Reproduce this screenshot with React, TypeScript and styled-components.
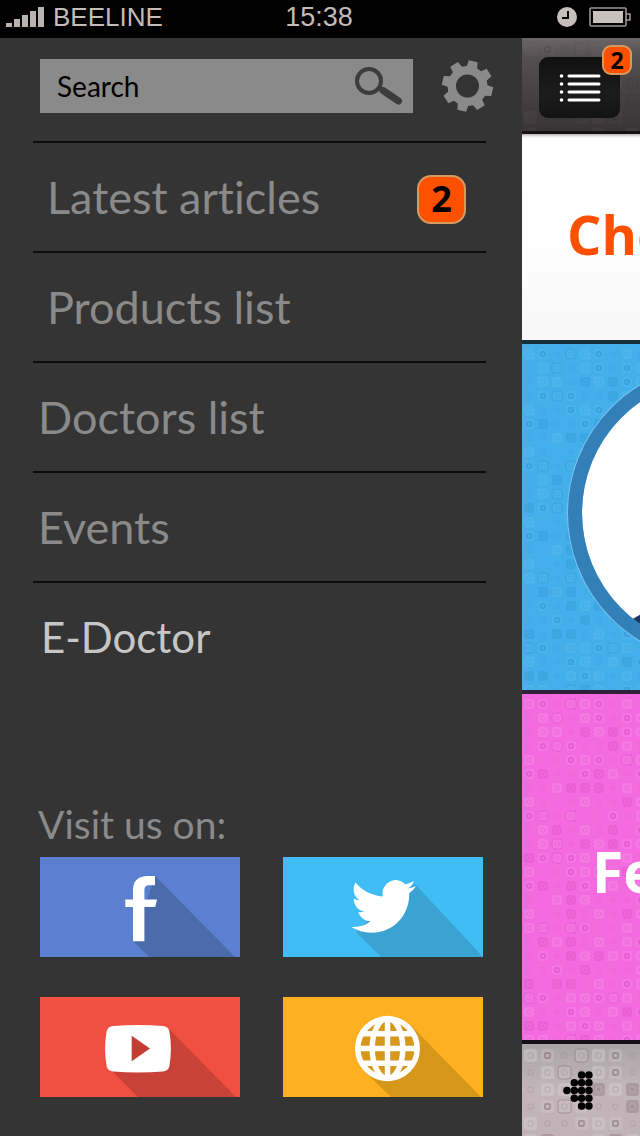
import React from "react";
import styled, { createGlobalStyle } from "styled-components";

const humanist = `Lato, "Open Sans", sans-serif`;
const bold = `"Open Sans", "Noto Sans", sans-serif`;

const GlobalStyle = createGlobalStyle`
  * { box-sizing: border-box; }
  body { margin: 0; background: #343434; font-family: ${humanist}; font-variant-ligatures: none; }
  button { border: 0; padding: 0; background: none; cursor: pointer; font: inherit; }
  a { color: inherit; text-decoration: none; }
  svg { display: block; }
`;

const Screen = styled.div`
  display: flex;
  flex-direction: column;
  min-height: 100vh;
  overflow: hidden;
`;

/* ---------- status bar ---------- */

const StatusBar = styled.header`
  display: grid;
  grid-template-columns: 1fr auto 1fr;
  align-items: center;
  height: 38px;
  padding: 0 8px 4px 6px;
  background: #000;
  color: #c2bbb8;
  font-family: "Liberation Sans", Arial, sans-serif;
  font-size: 26px;
  line-height: 34px;
`;

const Carrier = styled.div`
  display: flex;
  align-items: center;
  gap: 9px;
`;

const Time = styled.time`
  font-size: 27px;
`;

const Indicators = styled.div`
  display: flex;
  justify-content: flex-end;
  align-items: center;
  gap: 12px;
`;

/* ---------- drawer ---------- */

const Body = styled.div`
  display: flex;
  flex: 1;
`;

const Drawer = styled.aside`
  display: flex;
  flex-direction: column;
  flex: 1;
  min-width: 0;
  padding: 21px 36px 39px 33px;
  background: #343434;
`;

const SearchRow = styled.form`
  display: flex;
  align-items: center;
  gap: 27px;
  margin: 0 -9px 28px 7px;
`;

const SearchField = styled.div`
  display: flex;
  flex: 1;
  align-items: center;
  min-width: 0;
  height: 54px;
  padding: 0 10px 0 17px;
  background: #8a8a8a;
`;

const SearchInput = styled.input`
  flex: 1;
  min-width: 0;
  padding: 0;
  border: 0;
  outline: 0;
  background: transparent;
  color: #000;
  font-family: ${humanist};
  font-size: 28px;
  line-height: 36px;
  &::placeholder { color: #000; opacity: 1; }
`;

const MenuList = styled.ul`
  margin: 0;
  padding: 0;
  list-style: none;
`;

const MenuItem = styled.li`
  border-top: 2px solid #0c0c0c;
`;

const MenuLink = styled.a<{ $indent?: boolean; $active?: boolean }>`
  display: flex;
  align-items: center;
  justify-content: space-between;
  height: 108px;
  padding: 0 20px 0 ${(p) => (p.$indent ? 14 : p.$active ? 8 : 5)}px;
  color: ${(p) => (p.$active ? "#c6c6c6" : "#8a8a8a")};
  font-size: ${(p) => (p.$active ? 42 : 45)}px;
  line-height: 56px;
`;

const Badge = styled.span<{ $small?: boolean }>`
  display: flex;
  align-items: center;
  justify-content: center;
  width: ${(p) => (p.$small ? 30 : 49)}px;
  height: ${(p) => (p.$small ? 30 : 49)}px;
  margin-top: ${(p) => (p.$small ? 0 : 4)}px;
  border: 2px solid #d39a62;
  border-radius: ${(p) => (p.$small ? 9 : 14)}px;
  background: #ff5000;
  color: #000;
  font-family: ${bold};
  font-size: ${(p) => (p.$small ? 23 : 36)}px;
  line-height: 1;
  font-weight: 700;
`;

const Social = styled.section`
  margin-top: auto;
  padding: 0 3px 0 7px;
`;

const SocialTitle = styled.h2`
  margin: 0 0 9px -2px;
  color: #8a8a8a;
  font-size: 39px;
  line-height: 48px;
  font-weight: 400;
`;

const SocialGrid = styled.div`
  display: grid;
  grid-template-columns: 1fr 1fr;
  gap: 40px 43px;
`;

const Tile = styled.a<{ $color: string }>`
  display: flex;
  justify-content: center;
  height: 100px;
  overflow: hidden;
  background: ${(p) => p.$color};
`;

/* ---------- pushed page ---------- */

const Page = styled.main`
  display: flex;
  flex-direction: column;
  flex: 0 0 118px;
  overflow: hidden;
`;

const PageHeader = styled.div`
  position: relative;
  height: 96px;
  padding: 19px 17px;
  border-bottom: 3px solid #141213;
  background: linear-gradient(#6b6568, #544f51 20%, #464143 60%, #383334);
`;

const MenuButton = styled.button`
  position: relative;
  display: flex;
  align-items: center;
  justify-content: center;
  width: 81px;
  height: 61px;
  border-radius: 9px;
  background: linear-gradient(#101010, #1c1c1c 60%, #131313);
`;

const BadgeSpot = styled.span`
  position: absolute;
  top: -12px;
  right: -12px;
`;

const Panel = styled.section<{ $bg: string; $edge: string; $height: number }>`
  position: relative;
  height: ${(p) => p.$height}px;
  overflow: hidden;
  border-bottom: 4px solid ${(p) => p.$edge};
  background: ${(p) => p.$bg};
`;

const PageFooter = styled.footer`
  position: relative;
  display: flex;
  align-items: center;
  flex: 1;
  min-height: 92px;
  padding-left: 41px;
  overflow: hidden;
  background: linear-gradient(#aaa4a6, #c2b6ba 50%, #c0b3b7);
`;

const Backdrop = styled.svg`
  position: absolute;
  inset: 0;
  width: 100%;
  height: 100%;
`;

const Heading = styled.h1<{ $color: string; $pad: string; $size: number }>`
  position: relative;
  margin: 0;
  padding: ${(p) => p.$pad};
  color: ${(p) => p.$color};
  font-family: ${bold};
  font-size: ${(p) => p.$size}px;
  line-height: 76px;
  font-weight: 700;
  white-space: nowrap;
`;

const Portrait = styled.div`
  position: relative;
  width: 298px;
  height: 298px;
  margin: 20px 0 0 46px;
  overflow: hidden;
  border: 14px solid #337fb8;
  border-radius: 50%;
  background: #fff;
  background-clip: padding-box;
  box-shadow: 0 0 0 1px #79c3ee;
`;

const BackButton = styled.button`
  position: relative;
`;

/* ---------- texture ---------- */

/* . empty  a pale square  b dark square  o outlined  d dark ring  s small dot */
const cells = [
  "adsoadsas",
  "saosadsda",
  "saasbabda",
  "sdodssbas",
  "assdadsoa",
  "dbssdbasd",
  "ssabbbsas",
  "as.sassba",
  "doso.sdsa",
  "sabsasb.d",
  "saosbabda",
  "bdodassas",
  "a.sdadsba",
  "dbsbdsasa",
  "s.abasssd",
  "a.sbsasba",
  "aosodssas",
  "sbabsasad",
  "sdsbabada",
  "ssdsbsssa",
  "bsbbsasda",
  "odsaadoas",
  "assdasabd",
  "bbsadasas",
  "aasobasda",
  "bdsaodbas",
];

type TextureProps = { id: string; pitch: number; dark: string; light: string; strength: number };

function Texture({ id, pitch, dark, light, strength }: TextureProps) {
  const big = pitch - 4;
  const ring = pitch > 15 ? 5 : 4;
  return (
    <Backdrop aria-hidden="true">
      <defs>
        <pattern id={id} width={pitch * 9} height={pitch * cells.length} patternUnits="userSpaceOnUse">
          <g opacity={strength}>
            {cells.map((row, r) =>
              row.split("").map((kind, c) => {
                if (kind === ".") return null;
                const x = c * pitch + 2;
                const y = r * pitch + 5;
                const m = x + big / 2;
                const n = y + big / 2;
                const square = { x, y, width: big, height: big, rx: 3 };
                return (
                  <g key={`${r}-${c}`}>
                    {kind === "a" && <rect {...square} fill={light} opacity="0.6" />}
                    {kind === "b" && <rect {...square} fill={dark} opacity="0.5" />}
                    {kind === "d" && <rect {...square} fill={light} opacity="0.4" />}
                    {kind === "o" && (
                      <rect {...square} fill={light} fillOpacity="0.4" stroke={dark} strokeOpacity="0.7" />
                    )}
                    <rect
                      x={m - ring / 2}
                      y={n - ring / 2}
                      width={ring}
                      height={ring}
                      rx="1"
                      fill={kind === "b" ? dark : "none"}
                      stroke={kind === "b" ? light : dark}
                      strokeWidth={kind === "d" ? 2 : 1}
                      opacity={kind === "d" ? 0.7 : 0.35}
                    />
                  </g>
                );
              })
            )}
          </g>
        </pattern>
      </defs>
      <rect width="100%" height="100%" fill={`url(#${id})`} />
    </Backdrop>
  );
}

/* ---------- icons ---------- */

const SignalIcon = () => (
  <svg width="38" height="20" viewBox="0 0 38 20" fill="#b9b2af" aria-hidden="true">
    <path d="M0 16h6v4H0zM8 12h6v8H8zM16 8h6v12h-6zM24 4h6v16h-6zM32 0h6v20h-6z" />
  </svg>
);

const ClockIcon = () => (
  <svg width="20" height="20" viewBox="0 0 20 20" aria-hidden="true">
    <circle cx="10" cy="10" r="10" fill="#c6bfbc" />
    <path d="M11 4v7H5" fill="none" stroke="#000" strokeWidth="2" />
  </svg>
);

const BatteryIcon = () => (
  <svg width="43" height="20" viewBox="0 0 43 20" aria-hidden="true">
    <rect x="1" y="1" width="36" height="18" rx="1" fill="none" stroke="#9b9593" strokeWidth="1.6" />
    <rect x="4" y="4" width="30" height="12" fill="#c8c1be" />
    <path d="M37 7h4v6h-4" fill="none" stroke="#9b9593" strokeWidth="1.6" />
  </svg>
);

const SearchIcon = () => (
  <svg width="48" height="40" viewBox="0 0 48 40" fill="none" stroke="#3c3c3c" aria-hidden="true">
    <circle cx="14" cy="15" r="12" strokeWidth="4" />
    <path d="M24 21l4 3" strokeWidth="4" />
    <path d="M28 24.500l15.500 10.500" strokeWidth="7" strokeLinecap="round" />
  </svg>
);

function gearPath() {
  const points: string[] = [];
  for (let i = 0; i < 8; i++) {
    const mid = -76 + i * 45;
    [
      [-16, 20],
      [-11, 25.800],
      [9, 25.800],
      [15, 20],
    ].forEach(([offset, radius]) => {
      const a = ((mid + offset) * Math.PI) / 180;
      points.push(`${(26 + radius * Math.cos(a)).toFixed(2)} ${(26 + radius * Math.sin(a)).toFixed(2)}`);
    });
  }
  return `M${points.join("L")}ZM37.500 26a11.500 11.500 0 1 0-23 0a11.500 11.500 0 1 0 23 0Z`;
}

const GearIcon = () => (
  <svg width="55" height="52" viewBox="-1.500 0 55 52" aria-hidden="true">
    <path d={gearPath()} fill="#8a8a8a" fillRule="evenodd" />
  </svg>
);

const ListIcon = () => (
  <svg width="42" height="28" viewBox="0 0 42 28" stroke="#fff" strokeLinecap="round" aria-hidden="true">
    {[2, 10, 18, 26].map((y) => (
      <g key={y}>
        <circle cx="2.500" cy={y} r="1.800" fill="#fff" stroke="none" />
        <path d={`M10 ${y}h30`} strokeWidth="3" />
      </g>
    ))}
  </svg>
);

const TileSvg = styled.svg.attrs({ width: 200, height: 100, viewBox: "0 0 200 100", "aria-hidden": true })`
  flex: none;
`;

const FacebookArt = () => (
  <TileSvg>
    <path d="M115 19L195 100H109L93 84Z" fill="#4c6bab" />
    <path
      d="M115 19h-7c-10 0-15 5-15 14v9.500h-7.700V50H93v34.300h11.400V50h10.800l1.800-7.500h-12.600V34c0-4.500 1.500-5.700 5.600-5.700h5Z"
      fill="#fff"
    />
  </TileSvg>
);

const TwitterArt = () => (
  <TileSvg>
    <path d="M132 27L200 100H98L73 75L110 40Z" fill="#3aa3d2" />
    <path
      transform="translate(68 17) scale(2.700)"
      fill="#fff"
      d="M23.953 4.570a10 10 0 01-2.825.775 4.958 4.958 0 002.163-2.723c-.951.555-2.005.959-3.127 1.184a4.920 4.920 0 00-8.384 4.482C7.690 8.095 4.067 6.130 1.640 3.162a4.822 4.822 0 00-.666 2.475c0 1.710.870 3.213 2.188 4.096a4.904 4.904 0 01-2.228-.616v.060a4.923 4.923 0 003.946 4.827 4.996 4.996 0 01-2.212.085 4.936 4.936 0 004.604 3.417 9.867 9.867 0 01-6.102 2.105c-.390 0-.779-.023-1.170-.067a13.995 13.995 0 007.557 2.209c9.053 0 13.998-7.496 13.998-13.985 0-.210 0-.420-.015-.630A9.935 9.935 0 0024 4.590z"
    />
  </TileSvg>
);

const YoutubeArt = () => (
  <TileSvg>
    <path d="M129 32L196 100H98L71 73Z" fill="#c94237" />
    <path
      d="M73 29Q98 27 123 29Q128 29.500 129.300 34Q132.500 51.500 129.300 69.500Q128 74 123 74.600Q98 76.400 73 74.600Q68 74 66.700 69.500Q63.500 51.500 66.700 34Q68 29.500 73 29Z"
      fill="#fff"
    />
    <path d="M91.700 38.700L110 51.400L91.700 64.200Z" fill="#c23e35" />
  </TileSvg>
);

const GlobeArt = () => (
  <TileSvg>
    <path d="M127.500 28L198 100H108L81 74Z" fill="#d6971b" />
    <circle cx="104.500" cy="51.500" r="30" fill="#d6971b" />
    <g fill="none" stroke="#fff" strokeWidth="5.500">
      <circle cx="104.500" cy="51.500" r="29.700" />
      <ellipse cx="104.500" cy="51.500" rx="15.300" ry="30" />
      <path d="M104.500 21v61M74 51.500h61M79 36.800h51M79 66.200h51" />
    </g>
  </TileSvg>
);

const dotRows = [
  [2, 3],
  [1, 2, 3],
  [0, 1, 2, 3],
  [1, 2, 3],
  [2, 3],
];

const DotArrow = () => (
  <svg width="30" height="39" viewBox="0 0 30 39" aria-hidden="true">
    {dotRows.map((cols, r) =>
      cols.map((c) => <circle key={`${r}-${c}`} cx={4 + c * 7.300} cy={4 + r * 7.750} r="3.800" />)
    )}
  </svg>
);

/* ---------- screen ---------- */

const menu = [
  { label: "Latest articles", indent: true, count: 2 },
  { label: "Products list", indent: true },
  { label: "Doctors list" },
  { label: "Events" },
  { label: "E-Doctor", active: true },
];

const networks = [
  { name: "Facebook", color: "#5b80d1", Art: FacebookArt },
  { name: "Twitter", color: "#41bdf5", Art: TwitterArt },
  { name: "YouTube", color: "#f04f41", Art: YoutubeArt },
  { name: "Website", color: "#ffb020", Art: GlobeArt },
];

export default function App() {
  return (
    <Screen>
      <GlobalStyle />
      <StatusBar>
        <Carrier>
          <SignalIcon />
          BEELINE
        </Carrier>
        <Time>15:38</Time>
        <Indicators>
          <ClockIcon />
          <BatteryIcon />
        </Indicators>
      </StatusBar>
      <Body>
        <Drawer>
          <SearchRow role="search" onSubmit={(e) => e.preventDefault()}>
            <SearchField>
              <SearchInput type="text" placeholder="Search" aria-label="Search" />
              <button type="submit" aria-label="Submit search">
                <SearchIcon />
              </button>
            </SearchField>
            <button type="button" aria-label="Settings">
              <GearIcon />
            </button>
          </SearchRow>
          <nav>
            <MenuList>
              {menu.map((item) => (
                <MenuItem key={item.label}>
                  <MenuLink href="#" $indent={item.indent} $active={item.active}>
                    {item.label}
                    {item.count && <Badge>{item.count}</Badge>}
                  </MenuLink>
                </MenuItem>
              ))}
            </MenuList>
          </nav>
          <Social>
            <SocialTitle>Visit us on:</SocialTitle>
            <SocialGrid>
              {networks.map(({ name, color, Art }) => (
                <Tile key={name} href="#" aria-label={name} $color={color}>
                  <Art />
                </Tile>
              ))}
            </SocialGrid>
          </Social>
        </Drawer>
        <Page>
          <PageHeader>
            <Texture id="tex-header" pitch={17} dark="#2c2729" light="#75686c" strength={0.2} />
            <MenuButton type="button" aria-label="Menu">
              <ListIcon />
              <BadgeSpot>
                <Badge $small>2</Badge>
              </BadgeSpot>
            </MenuButton>
          </PageHeader>
          <Panel $bg="linear-gradient(#b5b3b4, #f4f2f3 3px, #fff 5px, #fefefe 50%, #f8f7f8)" $edge="#16303d" $height={210}>
            <Heading $color="#ff5000" $size={54} $pad="62px 0 0 45px">
              Che
            </Heading>
          </Panel>
          <Panel $bg="#43b0eb" $edge="#30203c" $height={350}>
            <Texture id="tex-blue" pitch={14} dark="#1f86c8" light="#62bff0" strength={0.5} />
            <Portrait>
              <svg width="270" height="270" viewBox="0 0 270 270" aria-hidden="true">
                <path d="M40 247L75 227V270H40Z" fill="#1d3468" />
              </svg>
            </Portrait>
          </Panel>
          <Panel $bg="#f36cdf" $edge="#170f17" $height={350}>
            <Texture id="tex-pink" pitch={14} dark="#d545bc" light="#fb93ea" strength={0.6} />
            <Heading $color="#fff" $size={57} $pad="139px 0 0 70px">
              Fe
            </Heading>
          </Panel>
          <PageFooter>
            <Texture id="tex-footer" pitch={17} dark="#84686f" light="#d5d0d1" strength={0.7} />
            <BackButton type="button" aria-label="Back">
              <DotArrow />
            </BackButton>
          </PageFooter>
        </Page>
      </Body>
    </Screen>
  );
}
